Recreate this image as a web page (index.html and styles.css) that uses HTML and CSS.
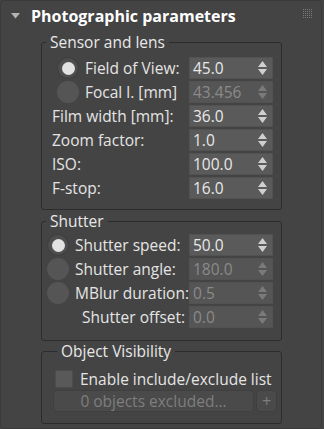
FILE: index.html
```html
<!DOCTYPE html>
<html lang="en">
<head>
  <meta charset="UTF-8" />
  <title>Photographic parameters</title>
  <link rel="stylesheet" href="styles.css">
</head>
<body>
  <div class="rollout">
    <div class="rollout-head">
      <svg class="caret" width="9" height="6" viewBox="0 0 9 6"><path d="M0 0H9L4.5 5.5Z" fill="#b4b4b4"/></svg>
      <h1>Photographic parameters</h1>
      <svg class="grip" width="10" height="10" viewBox="0 0 10 10" fill="#7a7a7a">
        <rect x="0" y="0" width="1" height="1"/><rect x="2" y="0" width="1" height="1"/><rect x="4" y="0" width="1" height="1"/><rect x="6" y="0" width="1" height="1"/><rect x="8" y="0" width="1" height="1"/>
        <rect x="0" y="2" width="1" height="1"/><rect x="2" y="2" width="1" height="1"/><rect x="4" y="2" width="1" height="1"/><rect x="6" y="2" width="1" height="1"/><rect x="8" y="2" width="1" height="1"/>
        <rect x="0" y="4" width="1" height="1"/><rect x="2" y="4" width="1" height="1"/><rect x="4" y="4" width="1" height="1"/><rect x="6" y="4" width="1" height="1"/><rect x="8" y="4" width="1" height="1"/>
        <rect x="0" y="6" width="1" height="1"/><rect x="2" y="6" width="1" height="1"/><rect x="4" y="6" width="1" height="1"/><rect x="6" y="6" width="1" height="1"/><rect x="8" y="6" width="1" height="1"/>
        <rect x="0" y="8" width="1" height="1"/><rect x="2" y="8" width="1" height="1"/><rect x="4" y="8" width="1" height="1"/><rect x="6" y="8" width="1" height="1"/><rect x="8" y="8" width="1" height="1"/>
      </svg>
    </div>

    <fieldset class="group sensor">
      <legend>Sensor and lens</legend>
      <div class="row">
        <span class="label"><span class="radio on"></span>Field of View:</span>
        <span class="spin">45.0<svg class="arrows" width="9" height="14" viewBox="0 0 9 14"><path d="M4.5 0L9 6H0Z M0 8H9L4.5 14Z" fill="currentColor"/></svg></span>
      </div>
      <div class="row">
        <span class="label"><span class="radio"></span>Focal l. [mm]</span>
        <span class="spin off">43.456<svg class="arrows" width="9" height="14" viewBox="0 0 9 14"><path d="M4.5 0L9 6H0Z M0 8H9L4.5 14Z" fill="currentColor"/></svg></span>
      </div>
      <div class="row">
        <span class="label plain">Film width [mm]:</span>
        <span class="spin">36.0<svg class="arrows" width="9" height="14" viewBox="0 0 9 14"><path d="M4.5 0L9 6H0Z M0 8H9L4.5 14Z" fill="currentColor"/></svg></span>
      </div>
      <div class="row">
        <span class="label plain">Zoom factor:</span>
        <span class="spin">1.0<svg class="arrows" width="9" height="14" viewBox="0 0 9 14"><path d="M4.5 0L9 6H0Z M0 8H9L4.5 14Z" fill="currentColor"/></svg></span>
      </div>
      <div class="row">
        <span class="label plain">ISO:</span>
        <span class="spin">100.0<svg class="arrows" width="9" height="14" viewBox="0 0 9 14"><path d="M4.5 0L9 6H0Z M0 8H9L4.5 14Z" fill="currentColor"/></svg></span>
      </div>
      <div class="row">
        <span class="label plain">F-stop:</span>
        <span class="spin">16.0<svg class="arrows" width="9" height="14" viewBox="0 0 9 14"><path d="M4.5 0L9 6H0Z M0 8H9L4.5 14Z" fill="currentColor"/></svg></span>
      </div>
    </fieldset>

    <fieldset class="group shutter">
      <legend>Shutter</legend>
      <div class="row">
        <span class="label"><span class="radio on"></span>Shutter speed:</span>
        <span class="spin">50.0<svg class="arrows" width="9" height="14" viewBox="0 0 9 14"><path d="M4.5 0L9 6H0Z M0 8H9L4.5 14Z" fill="currentColor"/></svg></span>
      </div>
      <div class="row">
        <span class="label"><span class="radio"></span>Shutter angle:</span>
        <span class="spin off">180.0<svg class="arrows" width="9" height="14" viewBox="0 0 9 14"><path d="M4.5 0L9 6H0Z M0 8H9L4.5 14Z" fill="currentColor"/></svg></span>
      </div>
      <div class="row">
        <span class="label"><span class="radio"></span>MBlur duration:</span>
        <span class="spin off">0.5<svg class="arrows" width="9" height="14" viewBox="0 0 9 14"><path d="M4.5 0L9 6H0Z M0 8H9L4.5 14Z" fill="currentColor"/></svg></span>
      </div>
      <div class="row">
        <span class="label indent">Shutter offset:</span>
        <span class="spin off">0.0<svg class="arrows" width="9" height="14" viewBox="0 0 9 14"><path d="M4.5 0L9 6H0Z M0 8H9L4.5 14Z" fill="currentColor"/></svg></span>
      </div>
    </fieldset>

    <fieldset class="group visibility">
      <legend>Object Visibility</legend>
      <div class="check-row"><span class="checkbox"></span>Enable include/exclude list</div>
      <div class="button-row">
        <span class="btn wide">0 objects excluded...</span>
        <span class="btn plus">+</span>
      </div>
    </fieldset>
  </div>
</body>
</html>
```

FILE: styles.css
```css
body {
  margin: 0;
  background: #444444;
  font-family: "Open Sans", "Noto Sans", sans-serif;
  font-size: 15.5px;
  color: #e4e4e4;
}

.rollout {
  width: 320px;
  height: 427px;
  border: 1px solid #3a3a3a;
  border-radius: 4px;
  overflow: hidden;
}

.rollout-head {
  display: flex;
  align-items: center;
  height: 30px;
  padding: 0 8px 0 10px;
}

.caret {
  margin-top: -1px;
}

.rollout-head h1 {
  flex: 1;
  margin: 0 0 0 11px;
  font-size: 16px;
  font-weight: bold;
  color: #ffffff;
}

.grip {
  margin-top: -4px;
}

.group {
  margin: 2px 39px 0 40px;
  padding: 0 8px 8px 0;
  border: 1px solid #2c2c2c;
  border-radius: 3px;
  min-width: 0;
}

.group legend {
  padding: 0 4px;
  margin-left: 4px;
  font-size: 15.5px;
  line-height: 18px;
  color: #e8e8e8;
}

.sensor {
  padding-top: 6px;
}

.shutter {
  padding-top: 4px;
  padding-bottom: 10px;
}

.row {
  display: grid;
  grid-template-columns: 1fr 84px;
  height: 22px;
  margin-bottom: 2px;
  align-items: center;
}

.label {
  display: flex;
  align-items: center;
  padding-left: 15px;
  white-space: nowrap;
}

.label.plain {
  padding-left: 10px;
}

.shutter .label {
  padding-left: 5px;
}

.shutter .label.indent {
  padding-left: 40px;
}

.radio {
  width: 22px;
  height: 22px;
  border-radius: 50%;
  background: #555555;
  margin-right: 6px;
  display: flex;
  align-items: center;
  justify-content: center;
  flex-shrink: 0;
}

.radio.on {
  background: #4e4e4e;
  box-shadow: inset 0 0 0 1px #3e3e3e;
}

.radio.on::after {
  content: "";
  width: 13px;
  height: 13px;
  border-radius: 50%;
  background: #e2e2e2;
}

.spin {
  position: relative;
  display: flex;
  align-items: center;
  height: 22px;
  padding-left: 4px;
  background: #5a5a5a;
  border-radius: 1px;
  box-shadow: inset 0 0 0 1px #525252;
  color: #e8e8e8;
}

.spin.off {
  background: #555555;
  color: #8a8a8a;
}

.arrows {
  position: absolute;
  right: 6px;
  top: 4px;
  color: #cfcfcf;
}

.spin.off .arrows {
  color: #7a7a7a;
}

.visibility {
  margin-top: 1px;
  padding: 9px 3px 11px 11px;
}

.check-row {
  display: flex;
  align-items: center;
  height: 20px;
  padding-left: 2px;
  margin-bottom: 1px;
}

.checkbox {
  width: 18px;
  height: 18px;
  background: #595959;
  box-shadow: inset 0 0 0 1px #4c4c4c;
  margin-right: 7px;
}

.button-row {
  display: flex;
  gap: 2px;
}

.btn {
  display: flex;
  align-items: center;
  justify-content: center;
  height: 22px;
  border: 1px solid #3f3f3f;
  border-radius: 4px;
  background: #4a4a4a;
  color: #7e7e7e;
  box-sizing: border-box;
}

.btn.wide {
  width: 201px;
}

.btn.plus {
  width: 21px;
  font-size: 16px;
}
```
